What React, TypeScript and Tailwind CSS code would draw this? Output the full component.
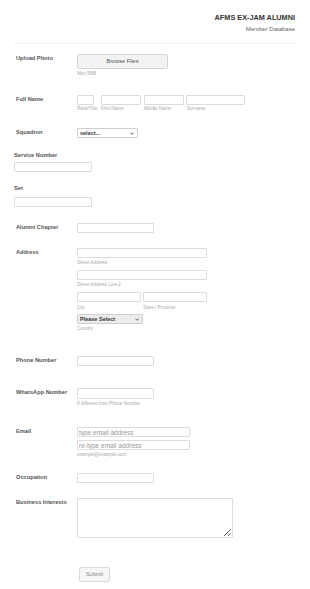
import React from "react";

const labelCls = "w-[77px] shrink-0 pl-[16px] pr-[2px] text-[5.7px] leading-[7px] font-bold text-[#555] whitespace-nowrap";
const inputCls = "block h-[10px] border border-[#dcdcdc] bg-white rounded-[1px] text-[6.5px] px-[1px] outline-none";
const subCls = "text-[4.6px] leading-[5px] text-[#aaa] whitespace-nowrap";

const Chevron = () => (
  <svg viewBox="0 0 10 6" className="w-[4px] h-[3px]" fill="none" stroke="#333" strokeWidth="2">
    <path d="M1 1l4 4 4-4" />
  </svg>
);

// drawn as a div so the tiny size renders predictably
const FakeSelect = ({ text, w, grey }: { text: string; w: string; grey?: boolean }) => (
  <div
    className={`flex items-center justify-between h-[10px] ${w} border border-[#cfcfcf] rounded-[1px] pl-[2px] pr-[3px] ${
      grey ? "bg-[#ececec]" : "bg-white"
    }`}
  >
    <span className="text-[5.5px] leading-[8px] font-bold text-[#333]">{text}</span>
    <Chevron />
  </div>
);

const Row = ({ label, className = "", children }: { label: string; className?: string; children: React.ReactNode }) => (
  <div className={`flex items-start ${className}`}>
    <div className={`${labelCls} pt-[1px]`}>{label}</div>
    <div className="flex flex-col">{children}</div>
  </div>
);

export default function App() {
  return (
    <div className="w-[310px] h-[589px] bg-white overflow-hidden" style={{ fontFamily: '"Liberation Sans", Arial, sans-serif' }}>
      <div className="pt-[14px] pr-[15px] flex flex-col items-end">
        <div className="text-[7.3px] leading-[8px] font-bold text-[#333]">AFMS EX-JAM ALUMNI</div>
        <div className="mt-[4px] text-[6px] leading-[7px] text-[#666]">Member Database</div>
      </div>
      <div className="mt-[10px] ml-[14px] mr-[15px] border-t border-[#eee]" />

      <form className="flex flex-col">
        <Row label="Upload Photo" className="mt-[10px]">
          <button
            type="button"
            className="w-[91px] h-[15px] border border-[#d5d5d5] bg-[#f3f3f3] rounded-[2px] text-[5.6px] text-[#555]"
          >
            Browse Files
          </button>
          <div className={`${subCls} mt-[1.5px]`}>Max 5MB</div>
        </Row>

        <Row label="Full Name" className="mt-[19.5px]">
          <div className="flex">
            <div className="flex flex-col w-[17px]">
              <input className={`${inputCls} w-[17px]`} />
              <div className={`${subCls} mt-[1px]`}>Rank/Title</div>
            </div>
            <div className="flex flex-col w-[40px] ml-[7px]">
              <input className={`${inputCls} w-[40px]`} />
              <div className={`${subCls} mt-[1px]`}>First Name</div>
            </div>
            <div className="flex flex-col w-[40px] ml-[3px]">
              <input className={`${inputCls} w-[40px]`} />
              <div className={`${subCls} mt-[1px]`}>Middle Name</div>
            </div>
            <div className="flex flex-col w-[59px] ml-[2px]">
              <input className={`${inputCls} w-[59px]`} />
              <div className={`${subCls} mt-[1px] pl-[1px]`}>Surname</div>
            </div>
          </div>
        </Row>

        <Row label="Squadron" className="mt-[17px]">
          <FakeSelect text="select..." w="w-[61px]" />
        </Row>

        <div className="mt-[13.5px] pl-[14px] flex flex-col">
          <div className="text-[5.7px] leading-[7px] font-bold text-[#555]">Service Number</div>
          <input className={`${inputCls} w-[78px] mt-[3.5px]`} />
        </div>

        <div className="mt-[12.5px] pl-[14px] flex flex-col">
          <div className="text-[5.7px] leading-[7px] font-bold text-[#555]">Set</div>
          <input className={`${inputCls} w-[78px] mt-[5.5px]`} />
        </div>

        <Row label="Alumni Chapter" className="mt-[16px]">
          <input className={`${inputCls} w-[77px]`} />
        </Row>

        <Row label="Address" className="mt-[15px]">
          <input className={`${inputCls} w-[130px]`} />
          <div className={`${subCls} mt-[1.5px]`}>Street Address</div>
          <input className={`${inputCls} w-[130px] mt-[5.5px]`} />
          <div className={`${subCls} mt-[1.5px]`}>Street Address Line 2</div>
          <div className="flex mt-[5.5px]">
            <div className="flex flex-col w-[64px]">
              <input className={`${inputCls} w-[64px]`} />
              <div className={`${subCls} mt-[2.5px]`}>City</div>
            </div>
            <div className="flex flex-col w-[64px] ml-[2px]">
              <input className={`${inputCls} w-[64px]`} />
              <div className={`${subCls} mt-[2.5px]`}>State / Province</div>
            </div>
          </div>
          <div className="mt-[4.5px]">
            <FakeSelect text="Please Select" w="w-[66px]" grey />
          </div>
          <div className={`${subCls} mt-[1.5px]`}>Country</div>
        </Row>

        <Row label="Phone Number" className="mt-[25.5px]">
          <input className={`${inputCls} w-[77px]`} />
        </Row>

        <Row label="WhatsApp Number" className="mt-[22px]">
          <input className={`${inputCls} w-[77px] h-[11px]`} />
          <div className={`${subCls} mt-[1.5px]`}>If different from Phone Number</div>
        </Row>

        <Row label="Email" className="mt-[21.5px]">
          <input className={`${inputCls} w-[113px] placeholder:text-[#999]`} placeholder="type email address" />
          <input className={`${inputCls} w-[113px] mt-[3px] placeholder:text-[#999]`} placeholder="re-type email address" />
          <div className={`${subCls} mt-[1.5px] text-[#888]`}>example@example.com</div>
        </Row>

        <Row label="Occupation" className="mt-[16.5px]">
          <input className={`${inputCls} w-[77px]`} />
        </Row>

        <Row label="Business Interests" className="mt-[15px]">
          <textarea className="block w-[156px] h-[40px] border border-[#dcdcdc] rounded-[1px] outline-none" />
        </Row>

        <div className="mt-[21px] pl-[79px]">
          <button
            type="button"
            className="w-[31px] h-[15px] border border-[#dadada] bg-[#f6f6f6] rounded-[2px] text-[5.5px] text-[#888]"
          >
            Submit
          </button>
        </div>
      </form>
    </div>
  );
}
